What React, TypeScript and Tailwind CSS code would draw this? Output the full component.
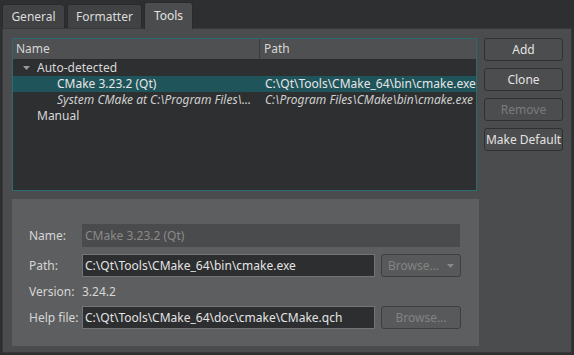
import React from 'react';

const font = { fontFamily: '"Noto Sans", "Open Sans", sans-serif' };

type Row = { name: string; path: string; depth: number; italic?: boolean; selected?: boolean; expander?: boolean };

const rows: Row[] = [
  { name: 'Auto-detected', path: '', depth: 0, expander: true },
  { name: 'CMake 3.23.2 (Qt)', path: 'C:\\Qt\\Tools\\CMake_64\\bin\\cmake.exe', depth: 1, selected: true },
  { name: 'System CMake at C:\\Program Files\\...', path: 'C:\\Program Files\\CMake\\bin\\cmake.exe', depth: 1, italic: true },
  { name: 'Manual', path: '', depth: 0 },
];

function SideButton({ label, disabled }: { label: string; disabled?: boolean }) {
  return (
    <button
      className={`h-[23px] w-[79px] rounded-[3px] border border-[#2f3031] bg-[#4c4d4e] text-[12px] leading-none ${
        disabled ? 'text-[#7b7b7b]' : 'text-[#e2e2e2]'
      }`}
    >
      {label}
    </button>
  );
}

function BrowseButton({ menu }: { menu?: boolean }) {
  return (
    <button className="flex h-[23px] w-[80px] items-center justify-center gap-[8px] rounded-[3px] border border-[#3d3e3f] bg-[#58595a] text-[12px] leading-none text-[#838383]">
      <span>Browse...</span>
      {menu && (
        <svg width="7" height="4" viewBox="0 0 7 4">
          <path d="M0 0h7L3.5 4z" fill="#8a8a8a" />
        </svg>
      )}
    </button>
  );
}

export default function App() {
  return (
    <div className="flex h-[355px] w-[574px] flex-col bg-[#2e2f31] text-[12px]" style={font}>
      {/* tabs */}
      <div className="flex h-[28px] items-end gap-[2px] pl-[2px]">
        <div className="flex h-[24px] w-[63px] items-center justify-center rounded-t-[3px] border border-b-0 border-[#2a2b2c] bg-[#414244] text-[#dcdcdc]">
          General
        </div>
        <div className="flex h-[24px] w-[75px] items-center justify-center rounded-t-[3px] border border-b-0 border-[#2a2b2c] bg-[#414244] text-[#dcdcdc]">
          Formatter
        </div>
        <div className="relative top-[1px] z-10 flex h-[27px] w-[49px] items-center justify-center rounded-t-[3px] border border-b-0 border-[#2a2b2c] bg-[#4b4c4d] text-[#e4e4e4]">
          Tools
        </div>
      </div>

      {/* pane */}
      <div className="mx-[2px] mb-[2px] flex flex-1 flex-col gap-[8px] border border-[#38393a] bg-[#4b4c4d] pl-[9px] pr-[8px] pt-[9px]">
        <div className="flex gap-[7px]">
          {/* tree */}
          <div className="h-[153px] w-[467px] border border-[#2a6a70] bg-[#2e2f31]">
            <div className="flex h-[21px] border-b border-[#2c2d2e] bg-[#4f5051] text-[#d6d6d6]">
              <div className="flex w-[247px] items-center border-r border-[#3b3c3d] pl-[3px]">Name</div>
              <div className="flex items-center pl-[4px]">Path</div>
            </div>
            {rows.map((r) => (
              <div
                key={r.name}
                className={`flex h-[16px] items-center ${r.selected ? 'bg-[#1f545a] text-[#e6e6e6]' : 'text-[#d8d8d8]'}`}
              >
                <div className={`flex w-[248px] items-center ${r.italic ? 'italic text-[#cfcfcf]' : ''}`}>
                  <span className="flex w-[24px] justify-center pl-[2px]">
                    {r.expander && (
                      <svg width="7" height="4" viewBox="0 0 7 4">
                        <path d="M0 0h7L3.5 4z" fill="#9a9a9a" />
                      </svg>
                    )}
                  </span>
                  <span className={`whitespace-nowrap ${r.depth ? 'pl-[20px]' : ''}`}>{r.name}</span>
                </div>
                <div className={`whitespace-nowrap pl-[4px] ${r.italic ? 'italic text-[#cfcfcf]' : ''}`}>{r.path}</div>
              </div>
            ))}
          </div>

          {/* buttons */}
          <div className="flex flex-col gap-[7px]">
            <SideButton label="Add" />
            <SideButton label="Clone" />
            <SideButton label="Remove" disabled />
            <SideButton label="Make Default" />
          </div>
        </div>

        {/* details */}
        <div className="flex h-[147px] w-[467px] flex-col bg-[#5d5e5f] pl-[17px] pt-[25px] text-[#d6d6d6]">
          <div className="flex h-[23px] items-center">
            <span className="w-[53px]">Name:</span>
            <div className="flex h-[23px] w-[378px] items-center bg-[#4a4b4c] pl-[3px] text-[#8a8a8a]">CMake 3.23.2 (Qt)</div>
          </div>
          <div className="mt-[7px] flex h-[23px] items-center">
            <span className="w-[53px]">Path:</span>
            <div className="flex h-[23px] w-[293px] items-center border border-[#737475] bg-[#2d2e30] pl-[2px] text-[#e4e4e4]">
              C:\Qt\Tools\CMake_64\bin\cmake.exe
            </div>
            <div className="ml-[6px]">
              <BrowseButton menu />
            </div>
          </div>
          <div className="flex h-[29px] items-center">
            <span className="w-[53px]">Version:</span>
            <span>3.24.2</span>
          </div>
          <div className="flex h-[23px] items-center">
            <span className="w-[53px]">Help file:</span>
            <div className="flex h-[23px] w-[293px] items-center border border-[#737475] bg-[#2d2e30] pl-[2px] text-[#e4e4e4]">
              C:\Qt\Tools\CMake_64\doc\cmake\CMake.qch
            </div>
            <div className="ml-[6px]">
              <BrowseButton />
            </div>
          </div>
        </div>
      </div>
    </div>
  );
}
